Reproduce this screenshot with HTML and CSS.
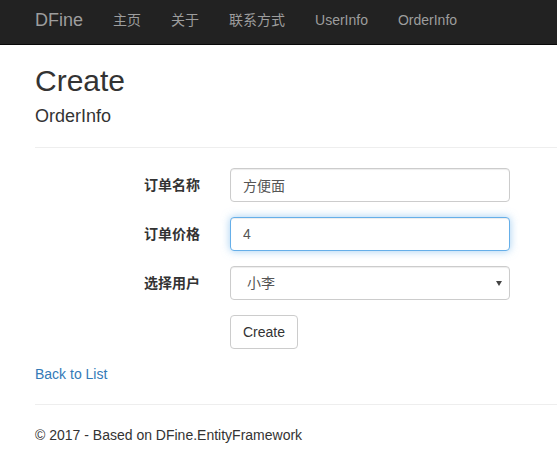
FILE: index.html
```html
<!DOCTYPE html>
<html lang="zh">
<head>
<meta charset="utf-8">
<title>Create - DFine</title>
<link rel="stylesheet" href="styles.css">
</head>
<body>
<nav class="navbar">
  <div class="container nav-inner">
    <a class="brand" href="#">DFine</a>
    <ul class="nav">
      <li><a href="#">主页</a></li>
      <li><a href="#">关于</a></li>
      <li><a href="#">联系方式</a></li>
      <li><a href="#">UserInfo</a></li>
      <li><a href="#">OrderInfo</a></li>
    </ul>
  </div>
</nav>
<div class="container body-content">
  <h2 class="title">Create</h2>
  <h4 class="subtitle">OrderInfo</h4>
  <hr class="rule">
  <form class="form">
    <div class="form-group">
      <label class="control-label">订单名称</label>
      <div class="field"><input class="form-control" type="text" value="方便面"></div>
    </div>
    <div class="form-group">
      <label class="control-label">订单价格</label>
      <div class="field"><input class="form-control focused" type="text" value="4"></div>
    </div>
    <div class="form-group">
      <label class="control-label">选择用户</label>
      <div class="field">
        <div class="select-wrap">
          <select class="form-control select"><option>小李</option></select>
          <span class="caret"></span>
        </div>
      </div>
    </div>
    <div class="form-group">
      <div class="control-label"></div>
      <div class="field"><button type="button" class="btn">Create</button></div>
    </div>
  </form>
  <div><a class="link" href="#">Back to List</a></div>
  <hr class="rule footer-rule">
  <footer class="footer"><p>© 2017 - Based on DFine.EntityFramework</p></footer>
</div>
</body>
</html>
```

FILE: styles.css
```css
* { box-sizing: border-box; }
html, body { margin: 0; padding: 0; }
body {
  font-family: "Liberation Sans", Arial, "Noto Sans CJK SC", sans-serif;
  font-size: 14px;
  line-height: 20px;
  color: #333;
  background: #fff;
  overflow: hidden;
}
.container {
  margin-left: 20px;
  padding: 0 0 0 15px;
}
.navbar {
  background: #222;
  border-bottom: 1px solid #080808;
  height: 45px;
}
.nav-inner {
  display: flex;
  align-items: flex-start;
  padding-left: 0;
}
.brand {
  display: block;
  padding: 10px 15px;
  font-size: 18px;
  line-height: 20px;
  color: #9d9d9d;
  text-decoration: none;
}
.nav {
  display: flex;
  list-style: none;
  margin: 0;
  padding: 0;
}
.nav a {
  display: block;
  padding: 10px 15px;
  line-height: 20px;
  color: #9d9d9d;
  text-decoration: none;
}
.title {
  font-size: 30px;
  font-weight: 500;
  line-height: 1.1;
  margin: 19px 0 10px;
}
.subtitle {
  font-size: 18px;
  font-weight: 500;
  line-height: 1.1;
  margin: 10px 0 10px;
}
.rule {
  border: 0;
  border-top: 1px solid #eee;
  margin: 20px 0;
  height: 0;
}
.form { margin: 0; }
.form-group {
  display: flex;
  margin: 0 0 15px -15px;
}
.control-label {
  flex: 0 0 195px;
  padding: 7px 15px 0;
  text-align: right;
  font-weight: 700;
}
.field {
  padding: 0 15px;
}
.form-control {
  display: block;
  width: 280px;
  height: 34px;
  padding: 6px 12px;
  font-family: "Liberation Sans", Arial, "Noto Sans CJK SC", sans-serif;
  font-size: 14px;
  line-height: 20px;
  color: #555;
  background: #fff;
  border: 1px solid #ccc;
  border-radius: 4px;
  box-shadow: inset 0 1px 1px rgba(0,0,0,.075);
  outline: none;
  margin: 0;
}
.focused {
  border-color: #66afe9;
  box-shadow: inset 0 1px 1px rgba(0,0,0,.075), 0 0 8px rgba(102,175,233,.6);
}
.select-wrap {
  position: relative;
  width: 280px;
}
.select {
  -webkit-appearance: none;
  appearance: none;
  padding-left: 16px;
}
.caret {
  position: absolute;
  right: 8px;
  top: 15px;
  width: 0;
  height: 0;
  border-left: 3px solid transparent;
  border-right: 3px solid transparent;
  border-top: 5px solid #444;
}
.btn {
  display: inline-block;
  height: 34px;
  padding: 6px 12px;
  font-family: "Liberation Sans", Arial, sans-serif;
  font-size: 14px;
  line-height: 20px;
  color: #333;
  background: #fff;
  border: 1px solid #ccc;
  border-radius: 4px;
  cursor: pointer;
}
.link {
  color: #337ab7;
  text-decoration: none;
}
.footer p { margin: 0 0 10px; }
```
